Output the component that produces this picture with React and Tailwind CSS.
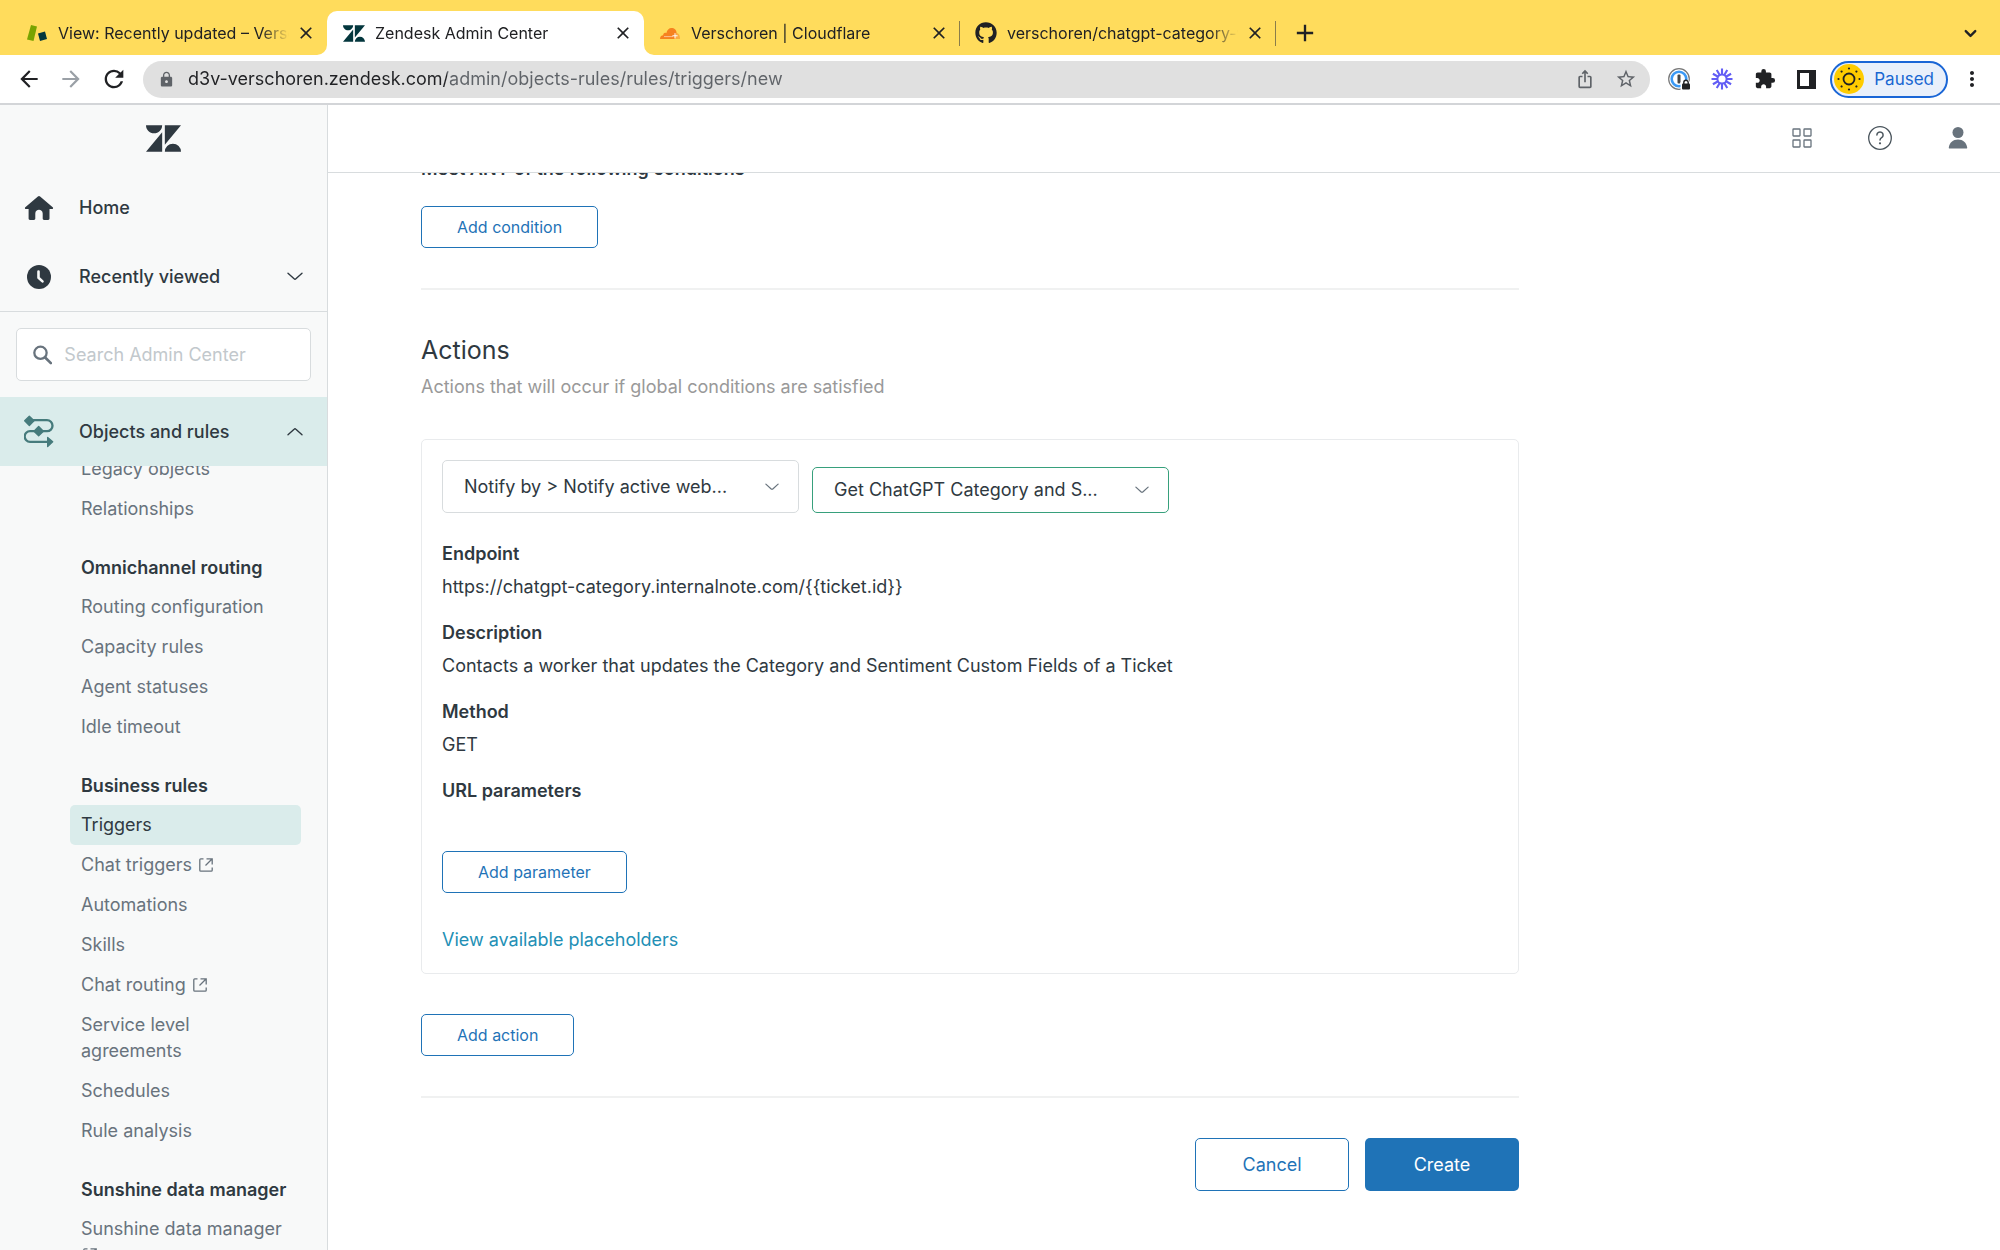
import { useState } from 'react';
import {
  MdAdd,
  MdArrowBack,
  MdArrowForward,
  MdClose,
  MdExtension,
  MdIosShare,
  MdLock,
  MdMoreVert,
  MdRefresh,
  MdStarBorder,
} from 'react-icons/md';
import { FaGithub } from 'react-icons/fa';
import { ChevronDown } from 'lucide-react';

const navSections = [
  {
    items: [{ label: 'Legacy objects' }, { label: 'Relationships' }],
  },
  {
    title: 'Omnichannel routing',
    items: [
      { label: 'Routing configuration' },
      { label: 'Capacity rules' },
      { label: 'Agent statuses' },
      { label: 'Idle timeout' },
    ],
  },
  {
    title: 'Business rules',
    items: [
      { label: 'Triggers' },
      { label: 'Chat triggers', external: true },
      { label: 'Automations' },
      { label: 'Skills' },
      { label: 'Chat routing', external: true },
      { label: 'Service level agreements' },
      { label: 'Schedules' },
      { label: 'Rule analysis' },
    ],
  },
  {
    title: 'Sunshine data manager',
    items: [{ label: 'Sunshine data manager', external: true }],
  },
];

const webhook = [
  { label: 'Endpoint', value: 'https://chatgpt-category.internalnote.com/{{ticket.id}}' },
  {
    label: 'Description',
    value: 'Contacts a worker that updates the Category and Sentiment Custom Fields of a Ticket',
  },
  { label: 'Method', value: 'GET' },
];

const ZendeskMark = ({ className }) => (
  <svg viewBox="0 2.9 24 18.2" fill="currentColor" className={className}>
    <path d="M12.914 2.904V16.29L24 2.905H12.914zM0 2.906C0 5.966 2.483 8.45 5.543 8.45s5.542-2.484 5.543-5.544H0zm11.086 4.807L0 21.096h11.086V7.713zm7.37 7.84a5.542 5.542 0 0 0-5.542 5.543H24a5.542 5.542 0 0 0-5.543-5.543z" />
  </svg>
);

const SupportMark = () => (
  <svg viewBox="0 0 20 16" className="w-5 h-4">
    <path d="M4 0l6 1.5L6.5 16 0 14.5z" fill="#78a300" />
    <path d="M11 8.5l7-2 2 7.5-7 2z" fill="#03363d" />
  </svg>
);

const CloudflareMark = () => (
  <svg viewBox="0 0 20 11" className="w-5 h-[11px]">
    <path d="M14 11l1.5-6.2c2.6-.3 4.500 1.900 4.500 6.200z" fill="#fbad41" />
    <path d="M0 11c0-2.200 1.300-3.600 3.200-3.700C3 5.200 5 4.300 6.300 5.200 7 2 9 0 11.500 0c2.800 0 5 2 5 4.500L14.500 11z" fill="#f6821f" />
    <path d="M4 8.600h9" stroke="#fff" strokeWidth=".5" />
    <path d="M15 5.200v5.200M12.400 7.800h5.200" stroke="#fff" strokeWidth="1" />
  </svg>
);

const TabFoot = ({ className }) => (
  <svg viewBox="0 0 10 10" className={className}>
    <path d="M10 0v10H0A10 10 0 0 0 10 0z" fill="#fff" />
  </svg>
);

const OnePassword = () => (
  <svg viewBox="0 0 22 22" className="w-[22px] h-[22px]" fill="none">
    <circle cx="11" cy="11" r="10.3" stroke="#777" strokeWidth="1.2" />
    <circle cx="11" cy="11" r="7.3" stroke="#3b99f5" strokeWidth="2.6" />
    <rect x="9.5" y="6.5" width="3" height="9" rx="1" fill="#444" />
    <path d="M12.5 22V14.500l2.500-2.500h5l2 2V22z" fill="#fff" />
    <rect x="14" y="15.5" width="8" height="6" rx="1" fill="#222" />
    <path d="M15.800 16v-1.500a2.200 2.200 0 0 1 4.400 0V16" stroke="#222" strokeWidth="1.4" />
  </svg>
);

const Loom = () => (
  <svg viewBox="-11 -11 22 22" className="w-[22px] h-[22px]" fill="none" stroke="#625df5">
    {[0, 30, 60, 90, 120, 150].map((angle) => (
      <path key={angle} d="M0-10.500V-4M0 4v6.500" strokeWidth="2.1" transform={`rotate(${angle})`} />
    ))}
    <circle r="4.6" strokeWidth="2" />
  </svg>
);

const SidePanel = () => (
  <svg viewBox="0 0 19 19" className="w-[19px] h-[19px]">
    <path d="M0 0h19v19H0zM3 3v13h9V3z" fill="#202124" fillRule="evenodd" />
  </svg>
);

const Sun = () => (
  <svg viewBox="0 0 30 30" className="w-[30px] h-[30px]">
    <circle cx="15" cy="15" r="15" fill="#fc0" />
    <circle cx="15" cy="15" r="5.5" fill="none" stroke="#222" strokeWidth="1.8" />
    {[0, 45, 90, 135, 180, 225, 270, 315].map((angle) => (
      <circle key={angle} cx="15" cy="4.5" r="1.1" fill="#222" transform={`rotate(${angle} 15 15)`} />
    ))}
  </svg>
);

const HomeIcon = () => (
  <svg viewBox="0 0 30 26" className="w-[30px] h-[26px]" fill="currentColor">
    <path d="M13.900 1.500a1.700 1.700 0 0 1 2.200 0l12.600 10.700c.8.700.3 1.900-.7 1.900h-2.500v9.400c0 .9-.5 1.400-1.400 1.400h-4c-.9 0-1.400-.5-1.400-1.400v-4.900c0-5-7.400-5-7.400 0v4.900c0 .9-.5 1.400-1.400 1.400H6c-.9 0-1.400-.5-1.400-1.400v-9.400H2c-1 0-1.500-1.200-.7-1.900z" />
  </svg>
);

const ClockIcon = () => (
  <svg viewBox="0 0 24 24" className="w-6 h-6">
    <circle cx="12" cy="12" r="12" fill="currentColor" />
    <path d="M11.500 6.500v6.300l4 3.600" fill="none" stroke="#f8f9f9" strokeWidth="2.6" strokeLinecap="round" strokeLinejoin="round" />
  </svg>
);

const SearchIcon = () => (
  <svg viewBox="0 0 22 22" className="w-[22px] h-[22px] text-[#68737d]" fill="none" stroke="currentColor">
    <circle cx="8.5" cy="8.5" r="7" strokeWidth="2.6" />
    <path d="M13.800 13.800l6.500 6.500" strokeWidth="3" strokeLinecap="round" />
  </svg>
);

const RulesIcon = () => (
  <svg viewBox="75 705 90 98" className="w-[30px] h-[33px] text-[#467b7c]">
    <path d="M91 720h53a16.500 16.500 0 0 1 0 33H93a16 16 0 0 0 0 32h54" fill="none" stroke="currentColor" strokeWidth="7" />
    <path d="M91 708l14 14-14 14-14-14zM119 739l14 14-14 14-14-14zM146 772l15 13-15 14z" fill="currentColor" stroke="currentColor" strokeWidth="4" strokeLinejoin="round" />
  </svg>
);

const ExternalIcon = () => (
  <svg viewBox="0 0 14 14" className="inline-block w-[14px] h-[14px] ml-0.5 align-[-1px]" fill="none" stroke="currentColor" strokeWidth="1.3">
    <path d="M4.500.8H1.800c-.7 0-1 .3-1 1v10.400c0 .7.300 1 1 1h10.400c.7 0 1-.3 1-1V9.500" />
    <path d="M7.500.8h5.700v5.700M13 1L6.500 7.500" />
  </svg>
);

// Thin chevron used by the admin UI, flatter than the browser's own
const ThinChevron = ({ className }) => (
  <svg viewBox="0 0 16 9" className={className} fill="none" stroke="currentColor" strokeWidth="1.4" strokeLinecap="round" strokeLinejoin="round">
    <path d="M1 1.200l6.100 5.500c.5.500 1.300.5 1.800 0L15 1.200" />
  </svg>
);

const GridIcon = () => (
  <svg viewBox="0 0 20 20" className="w-5 h-5" fill="none" stroke="#68737d" strokeWidth="1.3">
    <rect x="1" y="1" width="7" height="7" rx=".5" />
    <rect x="12" y="1" width="7" height="7" rx=".5" />
    <rect x="1" y="12" width="7" height="7" rx=".5" />
    <rect x="12" y="12" width="7" height="7" rx=".5" />
  </svg>
);

const HelpIcon = () => (
  <svg viewBox="0 0 24 24" className="w-6 h-6" fill="none" stroke="#49545c" strokeLinecap="round">
    <circle cx="12" cy="12" r="11.3" strokeWidth="1.3" />
    <path d="M8.900 9a3.100 3.100 0 1 1 4.700 2.700c-1.100.7-1.600 1.200-1.600 2.400" strokeWidth="1.5" />
    <circle cx="12" cy="17.3" r="1.1" fill="#49545c" stroke="none" />
  </svg>
);

const UserIcon = () => (
  <svg viewBox="0 0 20 22" className="w-5 h-[22px]" fill="#68737d">
    <circle cx="10" cy="5.5" r="5.5" />
    <path d="M.8 20.500C1.500 15.500 5 12.500 10 12.500s8.500 3 9.200 8c.1.600-.2 1-.8 1H1.600c-.6 0-.9-.4-.8-1z" />
  </svg>
);

const Tab = ({ icon, title, active, divider }) => (
  <div
    className={
      active
        ? 'relative flex items-center w-[317px] h-[44px] pl-4 pr-[11px] bg-white rounded-t-[10px]'
        : 'relative flex items-center w-[316px] h-[44px] pl-[15px] pr-[11px]'
    }
  >
    {active && <TabFoot className="absolute bottom-0 -left-[10px] w-[10px] h-[10px]" />}
    {active && <TabFoot className="absolute bottom-0 -right-[10px] w-[10px] h-[10px] -scale-x-100" />}
    <span className="flex w-[22px] justify-center">{icon}</span>
    <span className="flex-1 ml-[10px] mr-[7px] overflow-hidden whitespace-nowrap text-[16px] leading-6 mask-r-from-[calc(100%-28px)]">
      {title}
    </span>
    <button aria-label="Close tab">
      <MdClose size={20} />
    </button>
    {divider && <span className="absolute right-0 top-[10px] w-px h-[25px] bg-[#8a7d4a]" />}
  </div>
);

const BrowserChrome = () => (
  <div className="shrink-0 text-[#202124]">
    <div className="flex items-end h-[55px] pl-[11px] bg-[#ffdc5c]">
      <Tab icon={<SupportMark />} title="View: Recently updated – Verschoren" />
      <Tab icon={<ZendeskMark className="w-[22px] h-[17px] text-[#03363d]" />} title="Zendesk Admin Center" active />
      <Tab icon={<CloudflareMark />} title="Verschoren | Cloudflare" divider />
      <Tab icon={<FaGithub size={22} />} title="verschoren/chatgpt-category-worker" divider />
      <button aria-label="New tab" className="h-[44px] ml-[15px]">
        <MdAdd size={28} />
      </button>
      <button aria-label="Search tabs" className="h-[44px] ml-auto mr-5">
        <ChevronDown size={19} strokeWidth={3} />
      </button>
    </div>

    <div className="flex items-center h-[50px] px-4 bg-white border-b-2 border-[#d3d5d8]">
      <button aria-label="Back"><MdArrowBack size={26} /></button>
      <button aria-label="Forward" className="ml-4 text-[#9aa0a6]"><MdArrowForward size={26} /></button>
      <button aria-label="Reload" className="ml-4"><MdRefresh size={28} /></button>
      <div className="flex flex-1 items-center h-[37px] ml-[15px] pl-[15px] pr-[13px] rounded-full bg-[#e0e0e0] text-[#5f6368]">
        <MdLock size={17} />
        <input
          aria-label="Address"
          className="flex-1 ml-[13px] text-[18px] leading-6 outline-none text-transparent bg-clip-text bg-[linear-gradient(to_right,#202124_259px,#5f6368_259px)]"
          defaultValue="d3v-verschoren.zendesk.com/admin/objects-rules/rules/triggers/new"
        />
        <button aria-label="Share"><MdIosShare size={20} /></button>
        <button aria-label="Bookmark" className="ml-5"><MdStarBorder size={22} /></button>
      </div>
      <div className="flex items-center gap-[21px] ml-[18px]">
        <OnePassword />
        <Loom />
        <MdExtension size={22} />
        <SidePanel />
      </div>
      <button className="flex items-center h-[37px] ml-[14px] pl-[2px] pr-3 rounded-full border-2 border-[#1a66d6] bg-[#e9f0fb] text-[#1967d2] text-[17px]">
        <Sun />
        <span className="ml-[10px]">Paused</span>
      </button>
      <button aria-label="Menu" className="ml-3"><MdMoreVert size={24} /></button>
    </div>
  </div>
);

const Sidebar = ({ current, onSelect }) => (
  <aside className="flex flex-col shrink-0 w-[328px] bg-[#f8f9f9] border-r border-[#d8dcde] font-medium">
    <div className="flex justify-center pt-5 pb-[21px]">
      <ZendeskMark className="w-[35px] h-[27px]" />
    </div>
    <a href="#home" className="flex items-center h-[69px] pl-6">
      <span className="flex justify-center w-[30px]"><HomeIcon /></span>
      <span className="ml-[25px]">Home</span>
    </a>
    <button className="flex items-center h-[70px] pl-6 pr-6 border-b border-[#d8dcde]">
      <span className="flex justify-center w-[30px]"><ClockIcon /></span>
      <span className="ml-[25px] mr-auto">Recently viewed</span>
      <ThinChevron className="w-4 h-[9px]" />
    </button>
    <label className="flex items-center h-[53px] mx-4 my-4 px-4 bg-white border border-[#d8dcde] rounded-[5px]">
      <SearchIcon />
      <input
        aria-label="Search Admin Center"
        placeholder="Search Admin Center"
        className="w-full ml-3 font-normal outline-none placeholder:text-[#c2c8cc]"
      />
    </label>
    <button className="flex items-center shrink-0 h-[69px] pl-6 pr-6 bg-[#daeceb]">
      <span className="flex justify-center w-[30px]"><RulesIcon /></span>
      <span className="ml-[25px] mr-auto">Objects and rules</span>
      <ThinChevron className="w-4 h-[9px] rotate-180" />
    </button>
    <nav className="flex-1 min-h-0 overflow-hidden pl-[70px] pr-[26px]">
      <div className="flex flex-col gap-5 -mt-[17px]">
        {navSections.map((section, i) => (
          <section key={i}>
            {section.title && (
              <h3 className="px-[11px] py-[6px] font-semibold whitespace-nowrap">{section.title}</h3>
            )}
            {section.items.map((item) => (
              <a
                key={item.label}
                href="#nav"
                onClick={() => onSelect(item.label)}
                className={
                  item.label === current
                    ? 'block px-[11px] py-[7px] rounded-[5px] font-normal bg-[#daeceb]'
                    : 'block px-[11px] py-[7px] rounded-[5px] font-normal text-[#68737d]'
                }
              >
                {item.label}
                {item.external && ' '}
                {item.external && <ExternalIcon />}
              </a>
            ))}
          </section>
        ))}
      </div>
    </nav>
  </aside>
);

const SmallButton = ({ children }) => (
  <button className="h-[42px] px-[35px] rounded-[5px] border border-[#1f73b7] text-[16px] text-[#1f73b7]">
    {children}
  </button>
);

const Select = ({ label, value, className }) => (
  <div className="grid items-center w-[357px]">
    <select
      aria-label={label}
      className={`col-start-1 row-start-1 w-full pl-[21px] pr-12 appearance-none rounded-[5px] border bg-white outline-none ${className}`}
    >
      <option>{value}</option>
    </select>
    <ThinChevron className="col-start-1 row-start-1 justify-self-end w-[14px] h-2 mr-5 text-[#68737d] pointer-events-none" />
  </div>
);

const App = () => {
  const [current, setCurrent] = useState('Triggers');

  return (
    <div className="flex flex-col h-screen overflow-hidden font-[Inter,sans-serif] text-[18px] leading-[26px] text-[#2f3941] bg-white">
      <BrowserChrome />
      <div className="flex flex-1 min-h-0">
        <Sidebar current={current} onSelect={setCurrent} />

        <div className="flex flex-col flex-1 min-w-0">
          <header className="flex items-center justify-end shrink-0 h-[68px] pb-0.5 pr-8 gap-14 border-b border-[#d8dcde]">
            <button aria-label="Products"><GridIcon /></button>
            <button aria-label="Help"><HelpIcon /></button>
            <button aria-label="Profile"><UserIcon /></button>
          </header>

          <main className="flex-1 min-h-0 overflow-hidden pl-[93px] pr-10">
            <div className="max-w-[1098px] -mt-[17px]">
              <h3 className="font-semibold">Meet ANY of the following conditions</h3>
              <div className="mt-6">
                <SmallButton>Add condition</SmallButton>
              </div>

              <hr className="mt-10 border-t-2 border-[#f0f1f1]" />

              <h2 className="mt-11 text-[25px] leading-8">Actions</h2>
              <p className="mt-2 text-[#999]">Actions that will occur if global conditions are satisfied</p>

              {/* Webhook action */}
              <div className="mt-[39px] p-5 border border-[#e9ebed] rounded-[5px]">
                <div className="flex items-end gap-[13px]">
                  <Select label="Action" value="Notify by > Notify active web..." className="h-[53px] border-[#d8dcde]" />
                  <Select label="Webhook" value="Get ChatGPT Category and S..." className="h-[46px] border-[#37a07c]" />
                </div>
                <dl className="mt-7">
                  {webhook.map((field) => (
                    <div key={field.label} className="mb-5">
                      <dt className="font-semibold">{field.label}</dt>
                      <dd className="mt-[7px]">{field.value}</dd>
                    </div>
                  ))}
                </dl>
                <h4 className="font-semibold">URL parameters</h4>
                <div className="mt-[47px]">
                  <SmallButton>Add parameter</SmallButton>
                </div>
                <a href="#placeholders" className="inline-block mt-[34px] text-[#228fb5]">
                  View available placeholders
                </a>
              </div>

              <div className="mt-10">
                <SmallButton>Add action</SmallButton>
              </div>

              <hr className="mt-10 border-t-2 border-[#f0f1f1]" />

              <div className="flex justify-end gap-4 mt-10">
                <button className="w-[154px] h-[53px] rounded-[5px] border border-[#1f73b7] text-[#1f73b7]">Cancel</button>
                <button className="w-[154px] h-[53px] rounded-[5px] bg-[#1f73b7] text-white">Create</button>
              </div>
            </div>
          </main>
        </div>
      </div>
    </div>
  );
};

export default App;
